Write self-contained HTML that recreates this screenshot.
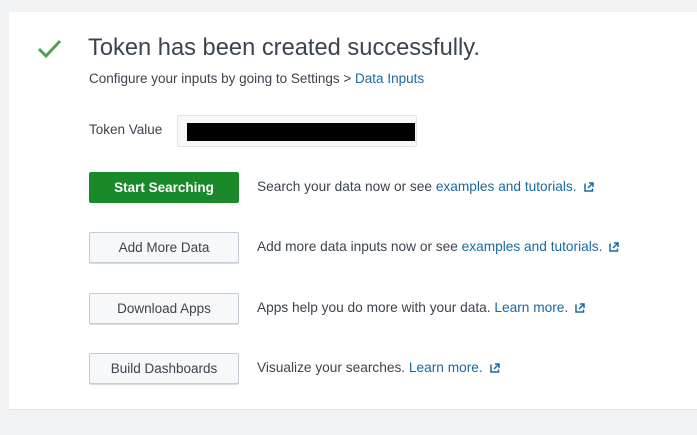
<!DOCTYPE html><html><head><style>
body{margin:0;width:697px;height:435px;background:#f2f3f5;font-family:"Liberation Sans",sans-serif;color:#3c444d;position:relative;overflow:hidden}
.p{position:absolute;left:9px;top:12px;width:700px;height:397px;background:#fff;border-bottom:1px solid #e1e3e6}
.a{position:absolute;white-space:nowrap}
.b{position:absolute;left:89px;width:148px;height:29px;border:1px solid #c3cbd4;border-radius:2px;background:#f7f8fa;font-size:13.5px;line-height:29px;text-align:center;color:#3c444d;box-shadow:0 1px 0 #d9dde2}
.d{position:absolute;left:257px;font-size:13.7px}
a{color:#1a6aa0;text-decoration:none}
svg.e{margin-left:7px;vertical-align:-1px}
</style></head><body>
<div class="p"></div>
<svg class="a" style="left:37px;top:38px" width="26" height="22"><path d="M2 11 L9 18 L23 3" stroke="#4fa155" stroke-width="3" fill="none"/></svg>
<div class="a" style="left:88px;top:35px;font-size:23.7px;color:#3c444d">Token has been created successfully.</div>
<div class="a" style="left:89px;top:71px;font-size:13.5px">Configure your inputs by going to Settings &gt; <a>Data Inputs</a></div>
<div class="a" style="left:89px;top:122px;font-size:13.5px">Token Value</div>
<div class="a" style="left:177px;top:115px;width:238px;height:30px;border:1px solid #e1e3e6;border-radius:2px;background:#f7f8fa"></div>
<div class="a" style="left:187px;top:123px;width:228px;height:18px;background:#000"></div>
<div class="b" style="top:172px;background:#1a8929;border-color:#1a8929;color:#fff;font-weight:bold;box-shadow:none">Start Searching</div>
<div class="d" style="top:179px">Search your data now or see <a>examples and tutorials.</a><svg class="e" width="10" height="10"><path d="M1 1.5V9H8.5V6.5M5 1H9V5M9 1L4 6" stroke="#1a6aa0" stroke-width="1.5" fill="none"/></svg></div>
<div class="b" style="top:232px">Add More Data</div>
<div class="d" style="top:239px">Add more data inputs now or see <a>examples and tutorials.</a><svg class="e" width="10" height="10"><path d="M1 1.5V9H8.5V6.5M5 1H9V5M9 1L4 6" stroke="#1a6aa0" stroke-width="1.5" fill="none"/></svg></div>
<div class="b" style="top:293px">Download Apps</div>
<div class="d" style="top:300px">Apps help you do more with your data. <a>Learn more.</a><svg class="e" width="10" height="10"><path d="M1 1.5V9H8.5V6.5M5 1H9V5M9 1L4 6" stroke="#1a6aa0" stroke-width="1.5" fill="none"/></svg></div>
<div class="b" style="top:353px">Build Dashboards</div>
<div class="d" style="top:360px">Visualize your searches. <a>Learn more.</a><svg class="e" width="10" height="10"><path d="M1 1.5V9H8.5V6.5M5 1H9V5M9 1L4 6" stroke="#1a6aa0" stroke-width="1.5" fill="none"/></svg></div>
</body></html>
